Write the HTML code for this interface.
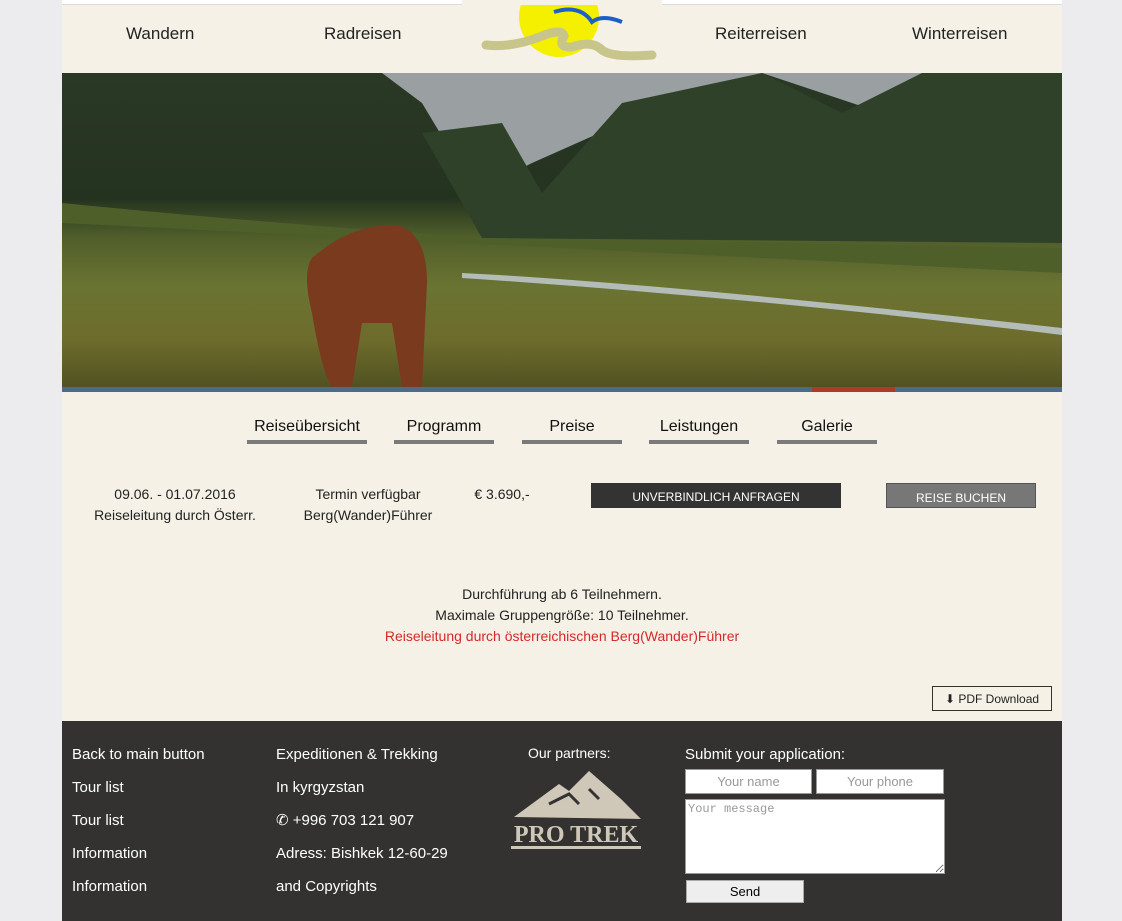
<!DOCTYPE html>
<html><head><meta charset="utf-8"><style>
body{margin:0;background:#ececee;font-family:"Liberation Sans",sans-serif;}
.wrap{position:absolute;left:62px;top:0;width:1000px;height:921px;background:#f5f1e6;}
.top{position:absolute;left:0;top:0;width:1000px;height:4px;background:#fff;border-bottom:1px solid #ddd}
.nav a{position:absolute;top:24px;font-size:17px;color:#222;text-decoration:none}
.hero{position:absolute;left:0;top:73px;width:1000px;height:314px;overflow:hidden;
background:linear-gradient(180deg,#2a3826 0%,#24331f 40%,#4f5d2a 52%,#6a7432 68%,#6e6c2c 85%,#505222 100%);}
.bar{position:absolute;left:0;top:387px;width:1000px;height:5px;background:#4b6b8c}
.tabs span{position:absolute;top:418px;width:100px;text-align:center;font-size:16px;color:#111;border-bottom:4px solid #7a7a7a;padding-bottom:4px}
.t{position:absolute;font-size:14px;color:#222;text-align:center;line-height:21px}
.foot{position:absolute;left:0;top:721px;width:1000px;height:200px;background:#333231;color:#fff;font-size:15px}
.foot div{position:absolute}
input,textarea{position:absolute;border:1px solid #999;background:#fff;font-size:13px;box-sizing:border-box;margin:0;text-align:center;color:#999}
</style></head><body>
<div class="wrap">
<div class="top"></div>
<div class="nav"><a style="left:64px">Wandern</a><a style="left:262px">Radreisen</a><a style="left:653px">Reiterreisen</a><a style="left:850px">Winterreisen</a></div>
<svg style="position:absolute;left:400px;top:0" width="200" height="73" viewBox="0 0 200 73">
<circle cx="97" cy="17" r="40" fill="#f4f000"/>
<rect x="0" y="0" width="200" height="5" fill="#f5f1e6"/>
<path d="M24 45 Q50 48 80 36 Q100 28 102 36 Q95 48 110 47 Q130 40 140 50 Q150 58 190 55" stroke="#c7c58a" stroke-width="9" fill="none" stroke-linecap="round"/>
<path d="M92 12 Q118 4 130 22 Q140 14 160 22" stroke="#1d5fc8" stroke-width="4" fill="none"/>
</svg>
<div class="hero">
<svg width="1000" height="314" viewBox="0 0 1000 314">
<path d="M320 0 L860 0 L820 40 L700 0 L560 50 L470 90 L430 110 L390 80 L360 30Z" fill="#9aa0a2"/>
<path d="M360 60 L440 50 L480 120 L560 30 L700 0 L780 40 L800 30 L860 0 L1000 0 L1000 170 L420 165Z" fill="#2f4128"/>
<path d="M0 130 Q200 150 420 165 L1000 175 L1000 200 L0 150Z" fill="#4f5f2a"/>
<path d="M400 200 Q600 210 1000 255 L1000 262 Q700 225 400 205Z" fill="#b4bcb8"/>
<path d="M250 185 Q240 200 250 240 Q260 300 270 314 L290 314 L300 250 L330 250 L340 314 L360 314 L365 210 Q365 160 335 152 Q290 150 250 185Z" fill="#7a3a1e"/>
</svg>
</div>
<div class="bar"></div><div style="position:absolute;left:750px;top:387px;width:83px;height:5px;background:#b03a2a"></div>
<div class="tabs"><span style="left:185px;width:120px">Reiseübersicht</span><span style="left:332px">Programm</span><span style="left:460px">Preise</span><span style="left:587px">Leistungen</span><span style="left:715px">Galerie</span></div>
<div class="t" style="left:13px;top:484px;width:200px">09.06. - 01.07.2016<br>Reiseleitung durch Österr.</div>
<div class="t" style="left:216px;top:484px;width:180px">Termin verfügbar<br>Berg(Wander)Führer</div>
<div class="t" style="left:400px;top:484px;width:80px">€ 3.690,-</div>
<div style="position:absolute;left:529px;top:483px;width:250px;height:25px;background:#333;color:#fff;font-size:12px;text-align:center;line-height:29px">UNVERBINDLICH ANFRAGEN</div>
<div style="position:absolute;left:824px;top:483px;width:148px;height:23px;background:#777;border:1px solid #555;color:#fff;font-size:12px;text-align:center;line-height:29px">REISE BUCHEN</div>
<div class="t" style="left:0;top:584px;width:1000px">Durchführung ab 6 Teilnehmern.<br>Maximale Gruppengröße: 10 Teilnehmer.<br><span style="color:#d42a2a">Reiseleitung durch österreichischen Berg(Wander)Führer</span></div>
<div style="position:absolute;left:870px;top:686px;width:118px;height:23px;border:1px solid #333;font-size:12px;text-align:center;line-height:25px;color:#222">⬇ PDF Download</div>
<div class="foot">
<div style="left:10px;top:17px;line-height:33px">Back to main button<br>Tour list<br>Tour list<br>Information<br>Information</div>
<div style="left:214px;top:17px;line-height:33px">Expeditionen &amp; Trekking<br>In kyrgyzstan<br>✆ +996 703 121 907<br>Adress: Bishkek 12-60-29<br>and Copyrights</div>
<div style="left:466px;top:24px;font-size:14px">Our partners:</div>
<svg style="position:absolute;left:447px;top:48px" width="134" height="82" viewBox="0 0 134 82">
<path d="M5 48 L50 15 L60 22 L80 2 L112 30 L132 50Z" fill="#cfc8b8"/>
<path d="M40 35 L60 25 L70 35 M80 20 L90 30" stroke="#333" stroke-width="3" fill="none"/>
<text x="67" y="73" text-anchor="middle" font-family="Liberation Serif,serif" font-weight="bold" font-size="24" fill="#cfc8b8">PRO TREK</text>
<rect x="2" y="77" width="130" height="3" fill="#cfc8b8"/>
</svg>
<div style="left:623px;top:25px">Submit your application:</div>
<input style="left:623px;top:48px;width:127px;height:25px" value="Your name">
<input style="left:754px;top:48px;width:128px;height:25px" value="Your phone">
<textarea style="left:623px;top:78px;width:260px;height:75px;text-align:left;font-family:'Liberation Mono',monospace;font-size:12px;padding:2px">Your message</textarea>
<div style="left:624px;top:159px;width:116px;height:21px;background:#eee;border:1px solid #aaa;color:#000;font-size:13px;text-align:center;line-height:22px">Send</div>
</div>
</div>
</body></html>
